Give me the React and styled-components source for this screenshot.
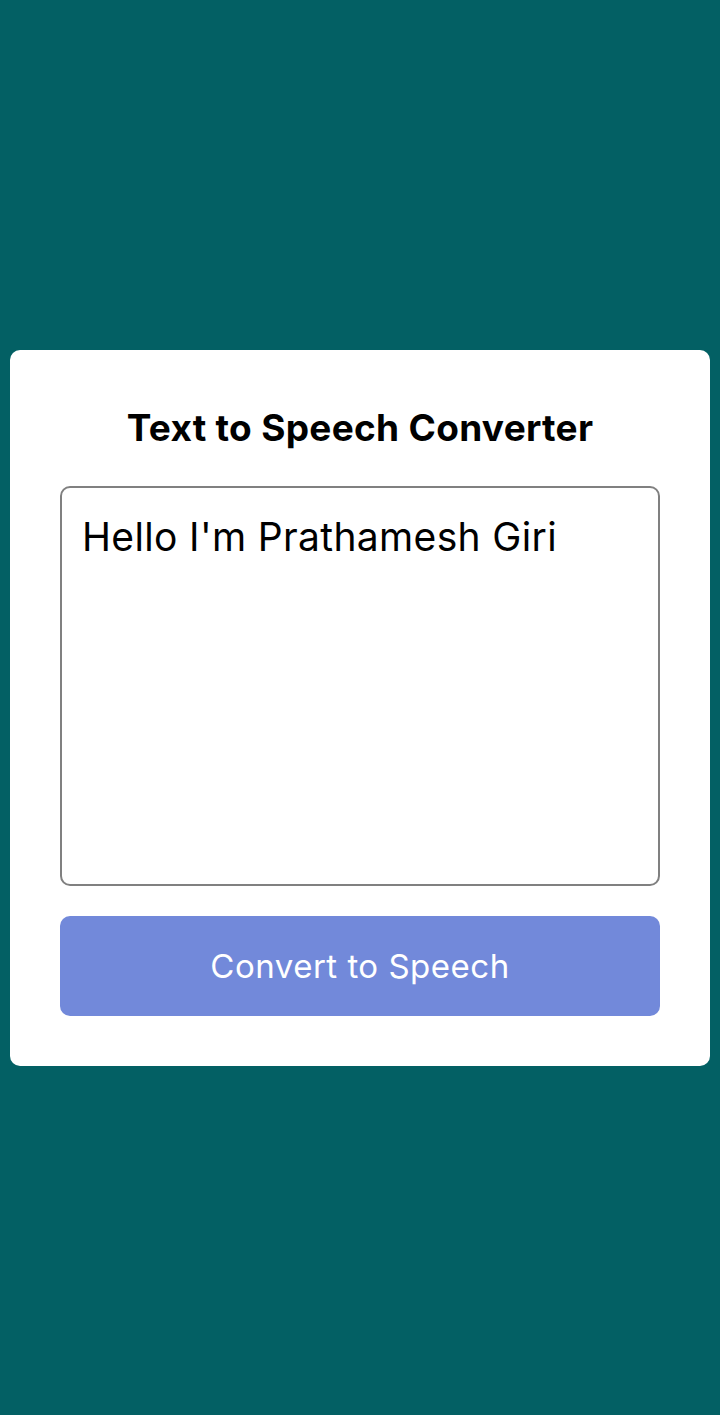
import React, { useState } from "react";
import styled, { createGlobalStyle } from "styled-components";

const Global = createGlobalStyle`
  * { box-sizing: border-box; }
  html, body { margin: 0; padding: 0; }
  body {
    background: #036064;
    font-family: "Inter", "Noto Sans", sans-serif;
  }
`;

const Page = styled.main`
  min-height: 100vh;
  display: flex;
  align-items: center;
  justify-content: center;
  padding: 0 10px;
`;

const Card = styled.section`
  width: 100%;
  background: #ffffff;
  border-radius: 10px;
  padding: 50px;
  display: flex;
  flex-direction: column;
`;

const Title = styled.h1`
  margin: 0 0 30px;
  font-size: 37px;
  line-height: 56px;
  letter-spacing: 0.3px;
  font-weight: 700;
  color: #000;
  text-align: center;
`;

const TextArea = styled.textarea`
  width: 100%;
  height: 400px;
  border: 2px solid #808080;
  border-radius: 10px;
  padding: 20px 20px 16px;
  font-family: inherit;
  font-size: 39px;
  line-height: 1.5;
  letter-spacing: 0.35px;
  color: #000;
  resize: none;
  outline: none;
  margin: 0 0 30px;
  display: block;
`;

const Button = styled.button`
  width: 100%;
  height: 100px;
  border: none;
  border-radius: 10px;
  background: #7289da;
  color: #fff;
  font-family: inherit;
  font-size: 33px;
  letter-spacing: 0.5px;
  cursor: pointer;
`;

export default function App() {
  const [text, setText] = useState("Hello I'm Prathamesh Giri");
  return (
    <>
      <Global />
      <Page>
        <Card>
          <Title>Text to Speech Converter</Title>
          <TextArea value={text} onChange={(e) => setText(e.target.value)} />
          <Button>Convert to Speech</Button>
        </Card>
      </Page>
    </>
  );
}
